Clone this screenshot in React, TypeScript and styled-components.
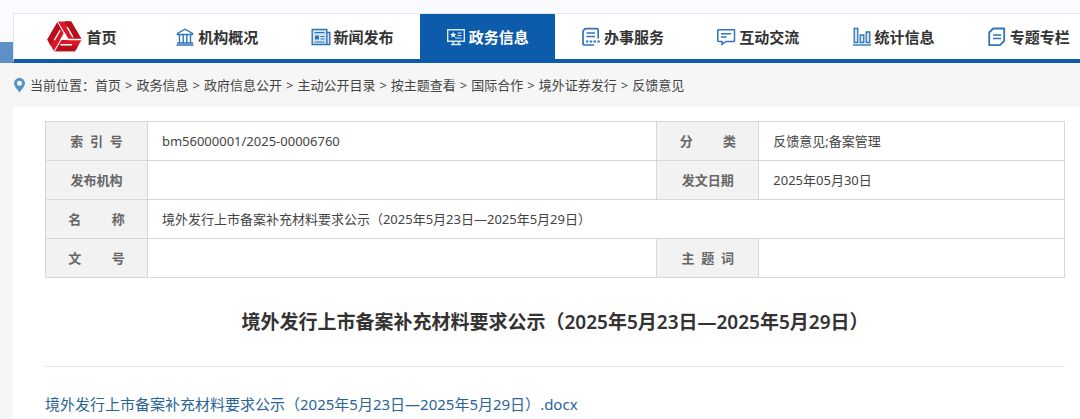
import React from "react";
import styled, { createGlobalStyle, css } from "styled-components";

const blue = "#0d5cab";
const iconBlue = "#2f74b8";

const GlobalStyle = createGlobalStyle`
  * { box-sizing: border-box; }
  body {
    margin: 0;
    background: #f6f6f6;
    color: #444;
    font: 13px/20px "Noto Sans", "Noto Sans CJK SC", sans-serif;
    overflow-x: hidden;
  }
  a { color: inherit; text-decoration: none; }
`;

const Page = styled.div`
  overflow: hidden;
`;

const Header = styled.header`
  padding: 13px 0 0 13px;
  background: linear-gradient(#fafbfe 42px, #5d90c6 42px);
`;

const Nav = styled.nav`
  display: flex;
  height: 50px;
  margin-right: -16px;
  background: #fff;
  border-top: 1px solid #e4e6e8;
  border-left: 1px solid #e4e6e8;
  border-bottom: 4px solid ${blue};
`;

const Tab = styled.a<{ $active?: boolean; $wide?: boolean }>`
  flex: 1;
  display: flex;
  align-items: center;
  justify-content: center;
  gap: ${(p) => (p.$wide ? 5 : 3)}px;
  color: #333;
  font-size: 15px;
  font-weight: 600;
  white-space: nowrap;
  svg {
    flex: none;
  }
  ${(p) =>
    p.$active &&
    css`
      background: ${blue};
      color: #fff;
    `}
`;

const Breadcrumb = styled.nav`
  display: flex;
  align-items: center;
  height: 44px;
  padding-left: 13px;
  white-space: nowrap;
`;

const Here = styled.span`
  margin-left: 4px;
`;

const Separator = styled.span`
  margin: 0 4px;
`;

const Panel = styled.main`
  margin-left: 13px;
  padding: 14px 15px 0 32px;
  background: #fff;
`;

const InfoTable = styled.table`
  width: 100%;
  table-layout: fixed;
  border-collapse: collapse;
`;

const Label = styled.th`
  height: 39px;
  padding: 0;
  border: 1px solid #d2d9dc;
  background: #f2f2f2;
  color: #666;
  font-weight: 600;
  text-align: center;
  white-space: pre;
`;

const Value = styled.td`
  padding: 0 14px;
  border: 1px solid #d2d9dc;
`;

const Title = styled.h1`
  margin: 0;
  padding: 30px 0;
  border-bottom: 1px solid #e6e6e6;
  color: #333;
  font-size: 19px;
  line-height: 28px;
  font-weight: 600;
  text-align: center;
`;

const Attachment = styled.p`
  margin: 0;
  padding: 25px 0 4px;
  color: #2a6496;
  font-size: 15px;
  line-height: 24px;
`;

const Logo = () => (
  <svg width="35" height="33" viewBox="0 0 35 32" aria-hidden="true">
    {[0, 120, 240].map((angle) => (
      <g key={angle} transform={`rotate(${angle} 17.5 16.9)`}>
        <path d="M34.6 19.3 28 30.7H7.6l6.6-11.400z" fill="#dd1626" />
        <path d="M31.5 25 28 30.7H7.6L11 25z" fill="#b80f1d" />
        <path d="M13.500 24.300h11.500M7.300 30.500l6.700-11.600" stroke="#fff" strokeWidth="1.4" />
      </g>
    ))}
    <path d="M17.500 11.500 22 19.600h-9z" fill="#fff" />
  </svg>
);

const Icon = ({ color = iconBlue, children }: { color?: string; children: React.ReactNode }) => (
  <svg
    width="20"
    height="20"
    viewBox="0 0 20 20"
    fill="none"
    stroke={color}
    strokeWidth="1.4"
    aria-hidden="true"
  >
    {children}
  </svg>
);

const OfficeIcon = () => (
  <Icon>
    <path d="M2.5 7.5v-1L10 2.200l7.500 4.300v1zM4.500 8v8M8.200 8v8M11.800 8v8M15.500 8v8M2 16h16M1.500 18h17" />
  </Icon>
);

const NewsIcon = () => (
  <Icon>
    <path d="M1.200 2.500h14.600v15H1.200zM15.800 5.500h3v12h-3" fill="#d5e5f4" />
    <path d="M3.500 5.600h10M9.500 9.500h4M9.500 12h4M3.500 15h10" strokeWidth="1.2" />
    <path d="M4 8.500h4v4H4z" fill={iconBlue} stroke="none" />
  </Icon>
);

const ScreenIcon = () => (
  <Icon color="#d9e9f8">
    <path d="M1.700 2.700h16.600v11.600H1.700zM7.500 14.500 7 17M12.500 14.500l.5 2.500M5 17.500h10" />
    <path d="M11.500 6h4M11.500 8.500h4M9 11h6.500" strokeWidth="1.2" />
    <path d="m7.200 4.800.9 2 2.200.2-1.700 1.400.6 2.200-2-1.200-2 1.200.6-2.200L4.100 7l2.200-.2z" fill="#fff" stroke="none" />
  </Icon>
);

const FormIcon = () => (
  <Icon>
    <path d="M17.200 11.500V3.200a1.500 1.500 0 0 0-1.500-1.500H4.200L2 4v12.300A1.700 1.700 0 0 0 3.700 18H13" strokeWidth="1.7" />
    <path d="M5.500 6h8.500M5.500 9.500h8.500" />
    <path d="M5 14.500h14.500" strokeWidth="1.8" strokeDasharray="2.4 1.4" />
  </Icon>
);

const ChatIcon = () => (
  <Icon>
    <path d="M2.500 2.700h15.300a.7.7 0 0 1 .7.7v10.400a.7.7 0 0 1-.7.7H10l-4 2.800v-2.800H2.500a.7.7 0 0 1-.7-.7V3.400a.7.7 0 0 1 .7-.7z" strokeWidth="1.5" />
    <path d="M5 6.700h10M5 10h5.500" />
  </Icon>
);

const ChartIcon = () => (
  <Icon>
    <path d="M2.200 1.500h3.600v14H2.200zM8.200 8h3.600v7.500H8.200zM14.200 5h3.600v10.500h-3.600z" fill="#d5e5f4" strokeWidth="1.3" />
    <path d="M1 18h18" />
  </Icon>
);

const TopicIcon = () => (
  <Icon>
    <path d="M6.200 1.500h11v12.300L13 18.200H2.200V5.500z" strokeWidth="1.8" strokeLinejoin="round" />
    <path d="M6 8h8M6 11.500h8" strokeWidth="1.6" />
  </Icon>
);

const PinIcon = () => (
  <svg width="13" height="16" viewBox="0 0 12 16" aria-hidden="true">
    <path
      d="M6 .8a5.500 5.500 0 0 0-5.500 5.500C.5 9.500 4 12.500 6 15.500c2-3 5.500-6 5.500-9.200A5.500 5.500 0 0 0 6 .8zm0 3a2.500 2.500 0 1 1 0 5 2.500 2.500 0 0 1 0-5z"
      fill="#5495c8"
      fillRule="evenodd"
    />
  </svg>
);

const tabs = [
  { label: "机构概况", icon: <OfficeIcon /> },
  { label: "新闻发布", icon: <NewsIcon /> },
  { label: "政务信息", icon: <ScreenIcon />, active: true },
  { label: "办事服务", icon: <FormIcon /> },
  { label: "互动交流", icon: <ChatIcon /> },
  { label: "统计信息", icon: <ChartIcon /> },
  { label: "专题专栏", icon: <TopicIcon /> },
];

const trail = [
  "首页",
  "政务信息",
  "政府信息公开",
  "主动公开目录",
  "按主题查看",
  "国际合作",
  "境外证券发行",
  "反馈意见",
];

const title = "境外发行上市备案补充材料要求公示（2025年5月23日—2025年5月29日）";

const spread = (text: string, count: number) => text.split("").join("\u00a0".repeat(count));

export default function App() {
  return (
    <Page>
      <GlobalStyle />
      <Header>
        <Nav>
          <Tab href="#" $wide>
            <Logo />
            首页
          </Tab>
          {tabs.map((tab) => (
            <Tab key={tab.label} href="#" $active={tab.active}>
              {tab.icon}
              {tab.label}
            </Tab>
          ))}
        </Nav>
      </Header>
      <Breadcrumb>
        <PinIcon />
        <Here>当前位置：</Here>
        {trail.map((name, i) => (
          <React.Fragment key={name}>
            {i > 0 && <Separator>&gt;</Separator>}
            <a href="#">{name}</a>
          </React.Fragment>
        ))}
      </Breadcrumb>
      <Panel>
        <InfoTable>
          <colgroup>
            <col width="10%" />
            <col width="50%" />
            <col width="10%" />
            <col width="30%" />
          </colgroup>
          <tbody>
            <tr>
              <Label scope="row">{spread("索引号", 2)}</Label>
              <Value>bm56000001/2025-00006760</Value>
              <Label scope="row">{spread("分类", 9)}</Label>
              <Value>反馈意见;备案管理</Value>
            </tr>
            <tr>
              <Label scope="row">发布机构</Label>
              <Value />
              <Label scope="row">发文日期</Label>
              <Value>2025年05月30日</Value>
            </tr>
            <tr>
              <Label scope="row">{spread("名称", 9)}</Label>
              <Value colSpan={3}>{title}</Value>
            </tr>
            <tr>
              <Label scope="row">{spread("文号", 9)}</Label>
              <Value />
              <Label scope="row">{spread("主题词", 2)}</Label>
              <Value />
            </tr>
          </tbody>
        </InfoTable>
        <Title>{title}</Title>
        <Attachment>
          <a href="#">{title}.docx</a>
        </Attachment>
      </Panel>
    </Page>
  );
}
